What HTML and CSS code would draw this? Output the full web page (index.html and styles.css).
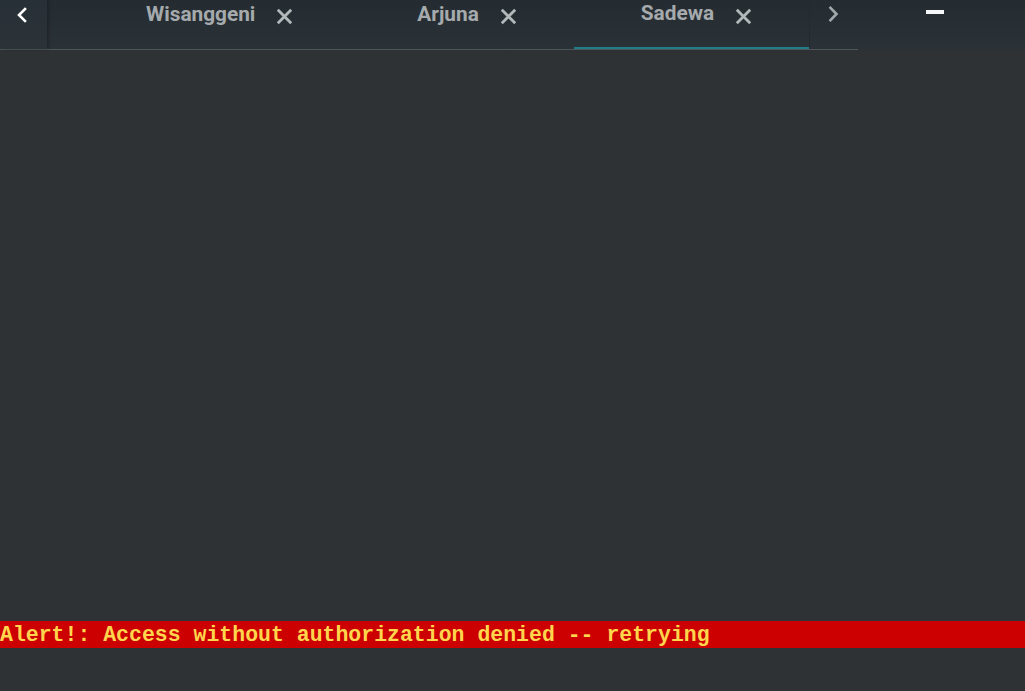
FILE: index.html
```html
<!DOCTYPE html>
<html>
<head>
<meta charset="utf-8">
<link rel="stylesheet" href="styles.css">
</head>
<body>
<div class="app">
  <header class="topbar">
    <div class="tabbar">
      <button class="nav nav-left" aria-label="Previous">
        <svg width="12" height="16" viewBox="0 0 12 16"><path d="M9 2 L3 8 L9 14" fill="none" stroke="#ffffff" stroke-width="2.6" stroke-linecap="square"/></svg>
      </button>
      <div class="tabs">
        <div class="tab"><span class="label">Wisanggeni</span><span class="close"><svg width="17" height="17" viewBox="0 0 17 17"><path d="M1.8 1.8 L15.2 15.2 M15.2 1.8 L1.8 15.2" stroke="#b3b8bb" stroke-width="2.8"/></svg></span></div>
        <div class="tab"><span class="label">Arjuna</span><span class="close"><svg width="17" height="17" viewBox="0 0 17 17"><path d="M1.8 1.8 L15.2 15.2 M15.2 1.8 L1.8 15.2" stroke="#b3b8bb" stroke-width="2.8"/></svg></span></div>
        <div class="tab active"><span class="label">Sadewa</span><span class="close"><svg width="17" height="17" viewBox="0 0 17 17"><path d="M1.8 1.8 L15.2 15.2 M15.2 1.8 L1.8 15.2" stroke="#b3b8bb" stroke-width="2.8"/></svg></span></div>
      </div>
      <button class="nav nav-right" aria-label="Next">
        <svg width="11" height="16" viewBox="0 0 11 16"><path d="M2.5 1.8 L8.5 8 L2.5 14.2" fill="none" stroke="#a3a8ab" stroke-width="2.6" stroke-linecap="square"/></svg>
      </button>
    </div>
    <div class="controls">
      <span class="minimize"></span>
    </div>
  </header>
  <main class="content"></main>
  <div class="alert">Alert!: Access without authorization denied -- retrying</div>
  <div class="footer-space"></div>
</div>
</body>
</html>
```

FILE: styles.css
```css
* { box-sizing: border-box; }
html, body {
  margin: 0;
  padding: 0;
  background: #2e3235;
  width: 1025px;
  height: 691px;
  overflow: hidden;
}
.app {
  display: flex;
  flex-direction: column;
  height: 691px;
}
.topbar {
  display: flex;
  height: 50px;
  background: linear-gradient(to bottom, #252c31, #2b3237);
  flex: none;
}
.tabbar {
  display: flex;
  width: 858px;
  height: 50px;
  border-bottom: 1px solid #4c565b;
}
.nav {
  border: 0;
  padding: 0;
  margin: 0;
  background: transparent;
  display: flex;
  justify-content: center;
  height: 49px;
}
.nav-left {
  width: 47px;
  padding-top: 7px;
  padding-right: 4px;
  background: linear-gradient(to bottom, #273036, #2b3338);
  box-shadow: 2px 0 3px rgba(0,0,0,0.25);
}
.nav-right {
  width: 49px;
  padding-top: 6px;
  padding-right: 1px;
  border-left: 1px solid #242a2e;
}
.tabs {
  display: flex;
  flex: 1;
  padding-left: 32px;
  overflow: hidden;
}
.tab {
  display: flex;
  align-items: flex-start;
  gap: 21px;
  padding: 0 57px 0 67px;
  height: 49px;
  border-bottom: 3px solid transparent;
  font-family: Roboto, "Liberation Sans", sans-serif;
  font-weight: 700;
  font-size: 20.8px;
  color: #a5aaad;
  white-space: nowrap;
}
.tab .label {
  line-height: 20px;
  padding-top: 4px;
}
.tab .close {
  display: flex;
  padding-top: 8px;
}
.tab.active {
  border-bottom-color: #1d7d89;
  height: 50px;
  margin-bottom: -1px;
}
.tab.active .label {
  padding-top: 3px;
}
.controls {
  flex: 1;
  display: flex;
  justify-content: flex-start;
  padding-left: 68px;
  padding-top: 10px;
}
.minimize {
  display: block;
  width: 18px;
  height: 4px;
  background: #f4f6f7;
}
.content {
  flex: 1;
}
.alert {
  flex: none;
  height: 27px;
  background: #cc0000;
  color: #ffd54d;
  font-family: "Liberation Mono", "Courier New", monospace;
  font-weight: 700;
  font-size: 21.5px;
  line-height: 27px;
  white-space: nowrap;
  padding-top: 1px;
}
.footer-space {
  flex: none;
  height: 43px;
}
```
